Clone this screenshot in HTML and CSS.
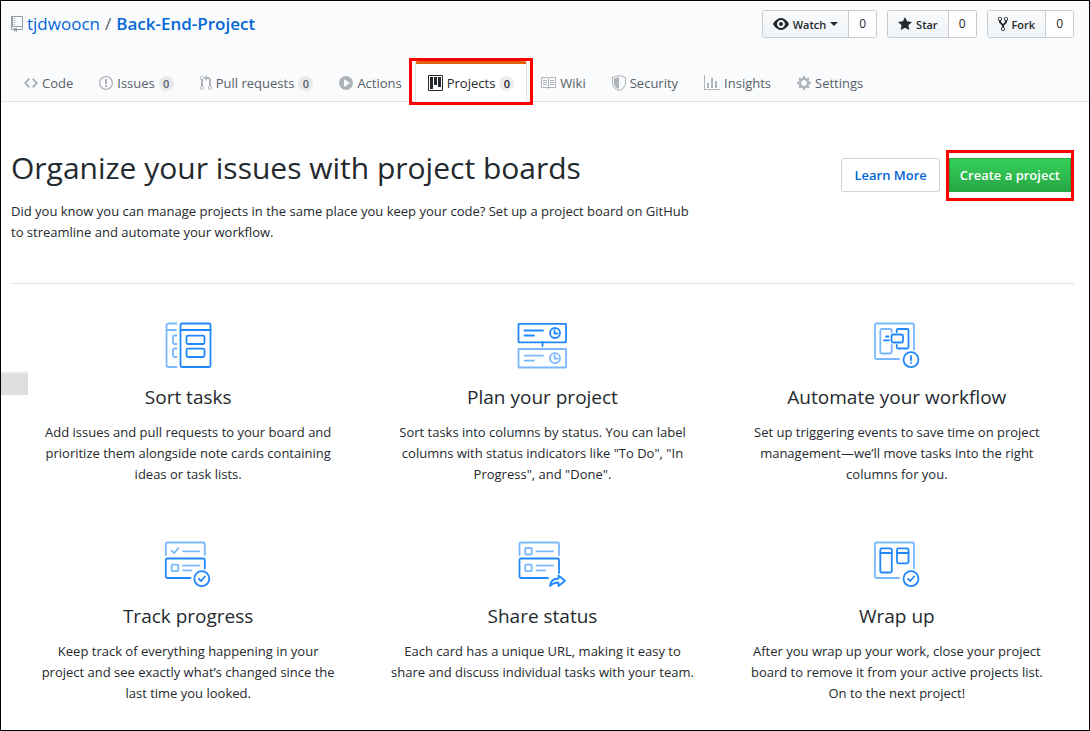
FILE: index.html
```html
<!DOCTYPE html>
<html lang="en">
<head>
<meta charset="utf-8">
<title>tjdwoocn/Back-End-Project: Projects</title>
<link rel="stylesheet" href="styles.css">
</head>
<body>
<div class="page">
  <header class="repo-header">
    <div class="repo-top">
      <h1 class="repo-name">
        <svg class="icon" width="12" height="16" viewBox="0 0 12 16"><path d="M4 9H3V8h1v1zm0-3H3v1h1V6zm0-2H3v1h1V4zm0-2H3v1h1V2zm8-1v12c0 .55-.45 1-1 1H6v2l-1.500-1.500L3 16v-2H1c-.55 0-1-.45-1-1V1c0-.55.45-1 1-1h10c.55 0 1 .45 1 1zm-1 10H1v2h2v-1h3v1h5v-2zm0-10H2v9h9V1z"/></svg>
        <a href="#">tjdwoocn</a><span class="slash">/</span><a class="strong" href="#">Back-End-Project</a>
      </h1>
      <div class="actions">
        <div class="social">
          <button type="button"><svg width="16" height="16" viewBox="0 0 16 16"><path d="M8.060 2C3 2 0 8 0 8s3 6 8.060 6C13 14 16 8 16 8s-3-6-7.940-6zM8 12c-2.200 0-4-1.780-4-4 0-2.200 1.800-4 4-4 2.220 0 4 1.800 4 4 0 2.220-1.780 4-4 4zm2-4c0 1.110-.89 2-2 2-1.110 0-2-.89-2-2 0-1.110.89-2 2-2 1.110 0 2 .89 2 2z"/></svg>Watch<span class="caret"></span></button><a href="#">0</a>
        </div>
        <div class="social">
          <button type="button"><svg width="14" height="16" viewBox="0 0 14 16"><path d="M14 6l-4.900-.64L7 1 4.900 5.360 0 6l3.600 3.260L2.670 14 7 11.670 11.330 14l-.93-4.740L14 6z"/></svg>Star</button><a href="#">0</a>
        </div>
        <div class="social">
          <button type="button"><svg width="10" height="16" viewBox="0 0 10 16"><path d="M8 1a1.993 1.993 0 00-1 3.720V6L5 8 3 6V4.720A1.993 1.993 0 002 1a1.993 1.993 0 00-1 3.720V6.500l3 3v1.780A1.993 1.993 0 005 15a1.993 1.993 0 001-3.720V9.500l3-3V4.720A1.993 1.993 0 008 1zM2 4.200C1.340 4.200.8 3.650.8 3c0-.65.55-1.200 1.200-1.200.65 0 1.200.55 1.200 1.200 0 .65-.55 1.200-1.200 1.200zm3 10c-.66 0-1.200-.55-1.200-1.200 0-.65.55-1.200 1.200-1.200.65 0 1.200.55 1.200 1.200 0 .65-.55 1.200-1.200 1.200zm3-10c-.66 0-1.200-.55-1.200-1.200 0-.65.55-1.200 1.200-1.200.65 0 1.200.55 1.200 1.200 0 .65-.55 1.200-1.200 1.200z"/></svg>Fork</button><a href="#">0</a>
        </div>
      </div>
    </div>
    <nav class="tabs">
      <a href="#"><svg width="14" height="16" viewBox="0 0 14 16"><path d="M9.500 3L8 4.500 11.500 8 8 11.500 9.500 13 14 8 9.500 3zm-5 0L0 8l4.500 5L6 11.500 2.500 8 6 4.500 4.500 3z"/></svg>Code</a>
      <a href="#"><svg width="14" height="16" viewBox="0 0 14 16"><path d="M7 2.300c3.140 0 5.700 2.560 5.700 5.700s-2.560 5.700-5.700 5.700A5.710 5.710 0 011.300 8c0-3.140 2.560-5.700 5.700-5.700zM7 1C3.140 1 0 4.140 0 8s3.140 7 7 7 7-3.140 7-7-3.140-7-7-7zm1 3H6v5h2V4zm0 6H6v2h2v-2z"/></svg>Issues<span class="count">0</span></a>
      <a href="#"><svg width="12" height="16" viewBox="0 0 12 16"><path d="M11 11.280V5c-.03-.78-.34-1.470-.94-2.060C9.460 2.350 8.780 2.030 8 2H7V0L4 3l3 3V4h1c.27.02.48.11.69.31.21.2.3.42.31.69v6.280A1.993 1.993 0 0010 15a1.993 1.993 0 001-3.720zm-1 2.920c-.66 0-1.200-.55-1.200-1.200 0-.65.55-1.200 1.200-1.200.65 0 1.200.55 1.200 1.200 0 .65-.55 1.200-1.200 1.200zM4 3c0-1.110-.89-2-2-2a1.993 1.993 0 00-1 3.720v6.560A1.993 1.993 0 002 15a1.993 1.993 0 001-3.720V4.720c.59-.34 1-.98 1-1.720zm-.8 10c0 .66-.55 1.200-1.200 1.200-.65 0-1.200-.55-1.200-1.200 0-.65.55-1.200 1.200-1.200.65 0 1.200.55 1.200 1.200zM2 4.200C1.340 4.200.8 3.650.8 3c0-.65.55-1.200 1.200-1.200.65 0 1.200.55 1.200 1.200 0 .65-.55 1.200-1.200 1.200z"/></svg>Pull requests<span class="count">0</span></a>
      <a href="#"><svg width="14" height="16" viewBox="0 0 14 16"><path d="M14 8A7 7 0 110 8a7 7 0 0114 0zm-8.223 3.482l4.599-3.066a.5.5 0 000-.832L5.777 4.518A.5.5 0 005 4.934v6.132a.5.5 0 00.777.416z"/></svg>Actions</a>
      <a class="selected" href="#" aria-current="page"><svg width="15" height="16" viewBox="0 0 15 16"><path fill-rule="evenodd" d="M10 12h3V2h-3v10zm-4-2h3V2H6v8zm-4 4h3V2H2v12zm-1 1h13V1H1v14zM14 0H1a1 1 0 00-1 1v14a1 1 0 001 1h13a1 1 0 001-1V1a1 1 0 00-1-1z"/></svg>Projects<span class="count">0</span><span class="mark mark-tab"></span></a>
      <a href="#"><svg width="16" height="16" viewBox="0 0 16 16"><path d="M3 5h4v1H3V5zm0 3h4V7H3v1zm0 2h4V9H3v1zm11-5h-4v1h4V5zm0 2h-4v1h4V7zm0 2h-4v1h4V9zm2-6v9c0 .55-.45 1-1 1H9.500l-1 1-1-1H2c-.55 0-1-.45-1-1V3c0-.55.45-1 1-1h5.500l1 1 1-1H15c.55 0 1 .45 1 1zm-8 .5L7.500 3H2v9h6V3.500zm7-.5H9.500l-.5.5V12h6V3z"/></svg>Wiki</a>
      <a href="#"><svg width="14" height="16" viewBox="0 0 14 16"><path fill-rule="evenodd" d="M0 2l7-2 7 2v6.020C14 12.690 8.690 16 7 16c-1.690 0-7-3.310-7-7.980V2zm1 .75L7 1l6 1.750v5.268C13 12.104 8.449 15 7 15c-1.449 0-6-2.896-6-6.982V2.750zm1 .75L7 2v12c-1.207 0-5-2.482-5-5.985V3.500z"/></svg>Security</a>
      <a href="#"><svg width="16" height="16" viewBox="0 0 16 16"><path d="M16 14v1H0V0h1v14h15zM5 13H3V8h2v5zm4 0H7V3h2v10zm4 0h-2V6h2v7z"/></svg>Insights</a>
      <a href="#"><svg width="14" height="16" viewBox="0 0 14 16"><path d="M14 8.770v-1.600l-1.940-.64-.45-1.090.88-1.840-1.130-1.130-1.810.91-1.090-.45-.69-1.920h-1.600l-.63 1.940-1.110.45-1.840-.88-1.130 1.130.91 1.810-.45 1.090L0 7.230v1.590l1.940.64.45 1.090-.88 1.840 1.130 1.130 1.810-.91 1.090.45.69 1.920h1.590l.63-1.940 1.110-.45 1.840.88 1.130-1.130-.92-1.810.47-1.090L14 8.750v.02zM7 11c-1.660 0-3-1.340-3-3s1.340-3 3-3 3 1.340 3 3-1.340 3-3 3z"/></svg>Settings</a>
    </nav>
  </header>

  <main class="content">
    <section class="intro">
      <div class="intro-text">
        <h2>Organize your issues with project boards</h2>
        <p>Did you know you can manage projects in the same place you keep your code? Set up a project board on GitHub to streamline and automate your workflow.</p>
      </div>
      <div class="intro-actions">
        <button type="button" class="btn">Learn More</button>
        <div class="create"><button type="button" class="btn primary">Create a project</button><span class="mark mark-create"></span></div>
      </div>
    </section>

    <section class="features">
      <article>
        <svg width="50" height="50" viewBox="0 0 50 50">
          <g class="soft"><path d="M13.500 3.500H5.500a2 2 0 0 0-2 2V45a2 2 0 0 0 2 2h8M3.500 10h9.500M13.500 15.500h-2a1.500 1.500 0 0 0-1.500 1.500v5.500a1.500 1.500 0 0 0 1.500 1.500h2M13.500 28.500h-2a1.500 1.500 0 0 0-1.500 1.500v5.500a1.500 1.500 0 0 0 1.500 1.500h2"/></g>
          <rect x="17.500" y="3.500" width="30" height="43.500" rx="1.500"/><path d="M17.500 10h30"/><rect x="23.500" y="15.700" width="18" height="8.300" rx="1.500"/><rect x="23.500" y="28.700" width="18" height="8.300" rx="1.500"/>
        </svg>
        <h3>Sort tasks</h3>
        <p>Add issues and pull requests to your board and prioritize them alongside note cards containing ideas or task lists.</p>
      </article>
      <article>
        <svg width="50" height="50" viewBox="0 0 50 50">
          <rect x="1.500" y="3.800" width="47.500" height="18.500" rx=".5"/><path d="M7.500 10.500h18.500M7.500 15.500h9.500M25.500 22v4"/><circle cx="38" cy="13" r="5"/><path d="M37.500 10.300v3.200h3"/>
          <g class="soft"><rect x="1.500" y="29" width="47.500" height="18.500" rx=".5"/><path d="M7.500 35.700h18.500M7.500 40.700h9.500"/><circle cx="38" cy="38.200" r="5"/><path d="M37.500 35.500v3.200h3"/></g>
        </svg>
        <h3>Plan your project</h3>
        <p>Sort tasks into columns by status. You can label columns with status indicators like "To Do", "In Progress", and "Done".</p>
      </article>
      <article>
        <svg width="50" height="50" viewBox="0 0 50 50">
          <g class="soft"><path d="M27 39H4.500a1.500 1.500 0 0 1-1.500-1.500V5a1.500 1.500 0 0 1 1.500-1.500h36A1.500 1.500 0 0 1 42 5v24.500M19.700 12v-1.500A1.500 1.500 0 0 0 18.200 9h-8.400a1.500 1.500 0 0 0-1.500 1.500v21.500a1.500 1.500 0 0 0 1.500 1.500h8.400a1.500 1.500 0 0 0 1.500-1.500v-7"/></g>
          <path d="M24.700 12v-1.500A1.500 1.500 0 0 1 26.200 9h8.800a1.500 1.500 0 0 1 1.500 1.500V27a1.500 1.500 0 0 1-1.500 1.500h-8.800a1.500 1.500 0 0 1-1.500-1.500v-2M14 16.500h2.500M12 20.300h5"/><rect x="19.500" y="14.500" width="11.500" height="8" rx="1.500"/><circle cx="39" cy="39.700" r="7.500"/><path d="M39 36v4.200M39 42.600v.4"/>
        </svg>
        <h3>Automate your workflow</h3>
        <p>Set up triggering events to save time on project management—we’ll move tasks into the right columns for you.</p>
      </article>
      <article>
        <svg width="50" height="50" viewBox="0 0 50 50">
          <g class="soft"><path d="M2.800 16V5a1.500 1.500 0 0 1 1.500-1.500h36A1.500 1.500 0 0 1 41.800 5v11M8.500 11.700l2.500 2.500 4.500-5M20 12.300h16.500M20 26.700h16.500M20 31.300h8.500"/><rect x="8.700" y="25.700" width="6.500" height="6.500" rx="1"/></g>
          <path d="M27.500 39H4.300a1.500 1.500 0 0 1-1.500-1.500V21a1.500 1.500 0 0 1 1.500-1.500h36a1.500 1.500 0 0 1 1.500 1.500v8.500"/><circle cx="38.800" cy="39.700" r="7.500"/><path d="M35.800 39.800l2.200 2.200 4-4.500"/>
        </svg>
        <h3>Track progress</h3>
        <p>Keep track of everything happening in your project and see exactly what’s changed since the last time you looked.</p>
      </article>
      <article>
        <svg width="50" height="50" viewBox="0 0 50 50">
          <g class="soft"><path d="M2.500 16V5a1.500 1.500 0 0 1 1.500-1.500h36.500A1.500 1.500 0 0 1 42 5v11M19.500 12.300h16.500M19.500 26.700h16.500M19.500 31.300h8.500"/><rect x="8.200" y="9" width="6.500" height="6.500" rx="1"/><rect x="8.200" y="25.700" width="6.500" height="6.500" rx="1"/></g>
          <path d="M31 39h-27A1.500 1.500 0 0 1 2.500 37.500V21a1.500 1.500 0 0 1 1.500-1.500h36.500a1.500 1.500 0 0 1 1.500 1.500v13M33 47c.5-4.500 3-7.500 8.500-7.500V36.500l6.500 5.200L41.500 47v-3.500c-3.500 0-6 .8-8.500 3.500z"/>
        </svg>
        <h3>Share status</h3>
        <p>Each card has a unique URL, making it easy to share and discuss individual tasks with your team.</p>
      </article>
      <article>
        <svg width="50" height="50" viewBox="0 0 50 50">
          <g class="soft"><path d="M27 39H4.500a1.500 1.500 0 0 1-1.500-1.500V5a1.500 1.500 0 0 1 1.500-1.500h36A1.500 1.500 0 0 1 42 5v24.500"/></g>
          <rect x="8.300" y="9.300" width="11.500" height="24.200" rx="1.500"/><path d="M8.300 14h11.500M25 14h11.500"/><rect x="25" y="9.300" width="11.500" height="15" rx="1.500"/><circle cx="39" cy="39.700" r="7.500"/><path d="M36 39.800l2.200 2.200 4-4.500"/>
        </svg>
        <h3>Wrap up</h3>
        <p>After you wrap up your work, close your project board to remove it from your active projects list. On to the next project!</p>
      </article>
    </section>
  </main>
  <div class="side-handle"></div>
</div>
</body>
</html>
```

FILE: styles.css
```css
* { box-sizing: border-box; }
body {
  margin: 0;
  color: #24292e;
  background: #fff;
  font: 13px/21px "Open Sans", "Noto Sans", sans-serif;
}
h1, h2, h3, p { margin: 0; }
a { color: #0366d6; text-decoration: none; }
svg { flex: none; fill: currentColor; }
button { font-family: inherit; cursor: pointer; }

.page {
  position: relative;
  min-height: 100vh;
  border: 1px solid #000;
}

.repo-header {
  padding: 9px 15px 0 10px;
  background: #fafbfc;
  border-bottom: 1px solid #e1e4e8;
}
.repo-top {
  display: flex;
  justify-content: space-between;
  align-items: flex-start;
}
.repo-name {
  display: flex;
  align-items: center;
  font-size: 17px;
  line-height: 28px;
  font-weight: 400;
}
.repo-name .icon { margin-right: 4px; fill: #959da5; }
.slash { margin: 0 5px; color: #586069; }
.strong { font-weight: 600; }

.actions { display: flex; gap: 10px; }
.social {
  display: flex;
  height: 28px;
  font-size: 12px;
  line-height: 26px;
  border: 1px solid #c8cbcf;
  border-radius: 3px;
  overflow: hidden;
}
.social button {
  display: flex;
  align-items: center;
  gap: 4px;
  padding: 0 10px;
  border: 0;
  border-right: 1px solid #c8cbcf;
  background: linear-gradient(#fafbfc, #eff3f6);
  color: #24292e;
  font-size: 11px;
  font-weight: 600;
}
.social a {
  padding: 0 10px;
  background: #fff;
  color: #24292e;
}
.caret {
  border: 4px solid transparent;
  border-top-color: currentColor;
  border-bottom: 0;
}

.tabs { display: flex; margin-top: 23px; }
.tabs a {
  position: relative;
  display: flex;
  align-items: center;
  height: 41px;
  margin-bottom: -1px;
  padding: 0 12px;
  border: 1px solid transparent;
  border-top: 3px solid transparent;
  border-bottom: 0;
  color: #586069;
  white-space: nowrap;
}
.tabs svg { margin-right: 4px; fill: #b0b4b8; }
.tabs .selected {
  background: #fff;
  border-color: #e36209 #e1e4e8 transparent;
  border-radius: 3px 3px 0 0;
  color: #24292e;
}
.tabs .selected svg { fill: #24292e; }
.count {
  min-width: 15px;
  margin-left: 4px;
  border-radius: 8px;
  background: rgba(27, 31, 35, .08);
  font-size: 11px;
  line-height: 15px;
  font-weight: 600;
  text-align: center;
}

.mark {
  position: absolute;
  border: 3px solid #f00;
  pointer-events: none;
}
.mark-tab { inset: -6px -7px -3px; }
.mark-create { inset: -8px -3px -9px; }

.content { padding: 42px 15px 24px 10px; }
.intro {
  display: flex;
  justify-content: space-between;
  padding-bottom: 40px;
  border-bottom: 1px solid #dfe2e5;
}
.intro-text { max-width: 690px; }
.intro h2 {
  margin-bottom: 9px;
  font-size: 30px;
  line-height: 48px;
  font-weight: 400;
}
.intro-actions {
  display: flex;
  align-items: flex-start;
  gap: 9px;
  padding: 14px 3px 0 0;
}
.create { position: relative; }
.btn {
  display: block;
  height: 34px;
  padding: 0 12px;
  border: 1px solid #cfd1d4;
  border-radius: 3px;
  background: #fff;
  color: #0366d6;
  font-size: 13px;
  font-weight: 600;
  white-space: nowrap;
}
.primary {
  padding: 0 10px;
  border: 1px solid #28a044;
  border-radius: 0;
  background: linear-gradient(#34d058, #28a745);
  color: #fff;
}

.features {
  display: grid;
  grid-template-columns: repeat(3, 1fr);
  row-gap: 54px;
  padding-top: 36px;
}
.features article {
  display: flex;
  flex-direction: column;
  align-items: center;
  padding: 0 24px;
  text-align: center;
}
.features svg {
  fill: none;
  stroke: #2188ff;
  stroke-width: 1.8;
  stroke-linecap: round;
  stroke-linejoin: round;
}
.features .soft { stroke: #79b8ff; }
.features h3 {
  margin: 12px 0 10px;
  font-size: 19px;
  line-height: 30px;
  font-weight: 400;
}

.side-handle {
  position: absolute;
  left: 0;
  top: 370px;
  width: 27px;
  height: 24px;
  border-top: 2px solid #f3f3f3;
  background: #dedede;
}
```
